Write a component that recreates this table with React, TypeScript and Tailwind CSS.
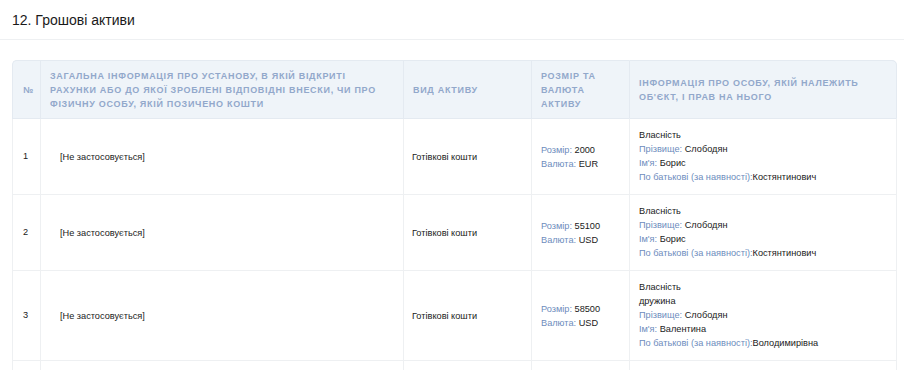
import React from "react";

const rows = [
  { n: 1, size: "2000", cur: "EUR", extra: null as string | null, last: "Слободян", first: "Борис", mid: "Костянтинович" },
  { n: 2, size: "55100", cur: "USD", extra: null, last: "Слободян", first: "Борис", mid: "Костянтинович" },
  { n: 3, size: "58500", cur: "USD", extra: "дружина", last: "Слободян", first: "Валентина", mid: "Володимирівна" },
];

const L = ({ children }: { children: React.ReactNode }) => <span className="text-[#6d8cbd]">{children}</span>;

export default function App() {
  return (
    <div className="bg-white w-[904px] h-[370px] overflow-hidden text-[#1a1a1a]" style={{ fontFamily: '"Liberation Sans", Arial, sans-serif' }}>
      <div className="px-3 pt-[11px] pb-[10px] border-b border-[#eef0f2]">
        <h2 className="text-[14px] leading-[18px] font-normal">12. Грошові активи</h2>
      </div>
      <div className="pl-3 pr-[7px] pt-5">
        <table className="w-[885px] table-fixed border-separate border-spacing-0 text-[9.2px] leading-[14px]">
          <colgroup>
            <col className="w-[28px]" />
            <col className="w-[363px]" />
            <col className="w-[128px]" />
            <col className="w-[98px]" />
            <col />
          </colgroup>
          <thead>
            <tr className="bg-[#eff4f9] text-[#92a8cb] text-[9px] leading-[14px] font-bold uppercase tracking-[0.7px] text-left">
              <th className="h-[59px] pl-[10px] pr-1 border-t border-l border-b border-[#e4eaf1] rounded-tl-[5px] font-bold">№</th>
              <th className="pl-[9px] pr-6 border-t border-l border-b border-[#e4eaf1] font-bold">Загальна інформація про установу, в якій відкриті рахунки або до якої зроблені відповідні внески, чи про фізичну особу, якій позичено кошти</th>
              <th className="pl-[9px] pr-2 border-t border-l border-b border-[#e4eaf1] font-bold">Вид активу</th>
              <th className="pl-[9px] pr-4 border-t border-l border-b border-[#e4eaf1] font-bold">Розмір та валюта активу</th>
              <th className="pl-[9px] pr-8 border-t border-l border-r border-b border-[#e4eaf1] rounded-tr-[5px] font-bold">Інформація про особу, якій належить об'єкт, і прав на нього</th>
            </tr>
          </thead>
          <tbody>
            {rows.map((r) => (
              <tr key={r.n}>
                <td className="pl-[10px] pt-[9px] pb-[10px] border-l border-b border-[#eef0f2]">{r.n}</td>
                <td className="pl-[19px] border-l border-b border-[#eef0f2]">[Не застосовується]</td>
                <td className="pl-2 border-l border-b border-[#eef0f2]">Готівкові кошти</td>
                <td className="pl-[9px] border-l border-b border-[#eef0f2]">
                  <div><L>Розмір:</L> {r.size}</div>
                  <div><L>Валюта:</L> {r.cur}</div>
                </td>
                <td className="pl-[9px] pt-[9px] pb-[10px] border-l border-r border-b border-[#eef0f2]">
                  <div>Власність</div>
                  {r.extra && <div>{r.extra}</div>}
                  <div><L>Прізвище:</L> {r.last}</div>
                  <div><L>Ім'я:</L> {r.first}</div>
                  <div><L>По батькові (за наявності):</L>{r.mid}</div>
                </td>
              </tr>
            ))}
            <tr>
              <td className="h-[40px] border-l border-[#eef0f2]"></td>
              <td className="border-l border-[#eef0f2]"></td>
              <td className="border-l border-[#eef0f2]"></td>
              <td className="border-l border-[#eef0f2]"></td>
              <td className="border-l border-r border-[#eef0f2]"></td>
            </tr>
          </tbody>
        </table>
      </div>
    </div>
  );
}
